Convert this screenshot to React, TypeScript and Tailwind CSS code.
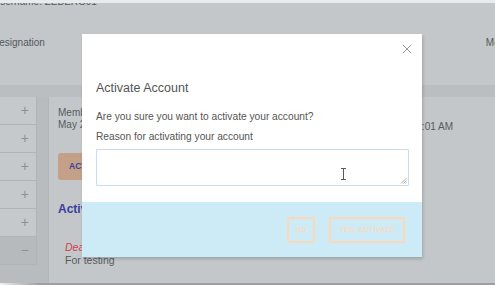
import { X } from 'lucide-react'

const font = { fontFamily: '"Liberation Sans", Arial, sans-serif' }

export default function App() {
  return (
    <div className="relative w-[495px] h-[285px] overflow-hidden bg-[#c3c7ca] text-[#4a4d50]" style={font}>
      <Page />
      <Modal />
    </div>
  )
}

function Page() {
  return (
    <div className="flex flex-col h-full">
      <div className="relative h-[9px] overflow-hidden shrink-0">
        <div className="h-[3px] bg-[#e9eaeb] absolute inset-x-0 top-0 z-10" />
        <div className="-ml-[7px] -mt-[4px] text-[10px] leading-[12px] text-[#585b5e] whitespace-nowrap">Username: ZEBERG01</div>
      </div>

      <div className="flex h-[76px] pt-[28px] text-[10px] leading-[12px] text-[#55585b] whitespace-nowrap shrink-0">
        <span className="-ml-[8px]">Designation</span>
        <span className="ml-[441px]">Mobile</span>
      </div>

      <div className="h-[12px] bg-[#babec1] shrink-0" />

      <div className="flex flex-1 min-h-0">
        <div className="w-[48px] bg-[#b8bcbf] flex">
          <div className="w-[37px] flex flex-col">
            {[0, 1, 2, 3, 4].map((i) => (
              <div key={i} className="h-[28px] bg-[#c5c9cc] border-b border-r border-[#b0b4b7] flex items-center justify-end pr-[7px] text-[14px] font-light text-[#8d9195]">
                +
              </div>
            ))}
            <div className="h-[28px] bg-[#b6babd] border-b border-r border-[#b0b4b7] flex items-center justify-end pr-[7px] text-[14px] text-[#8d9195]">
              −
            </div>
          </div>
        </div>

        <div className="flex-1 bg-[#c3c7ca] border-l border-[#b3b7ba] pl-[9px] pt-[10px] whitespace-nowrap">
          <div className="text-[10px] leading-[12px] text-[#585b5e]">Member since</div>
          <div className="flex justify-between pr-[42px] text-[10px] leading-[12px] text-[#585b5e]">
            <span>May 21, 2021</span>
            <span className="mt-[2px]">May 24, 2021 10:49:01 AM</span>
          </div>

          <div className="mt-[20px] w-[90px] h-[27px] rounded-[3px] bg-[#c4a088] flex items-center pl-[11px] text-[8.5px] font-bold text-[#3d40a0]">
            ACTIVATE
          </div>

          <div className="mt-[21px] text-[12px] leading-[16px] font-bold text-[#3a3e9e]">Activity Log</div>

          <div className="mt-[24px] pl-[7px] text-[10.5px] leading-[13px]">
            <div className="italic text-[#cf3f4a]">Deactivated</div>
            <div className="text-[#585b5e]">For testing</div>
          </div>
        </div>
      </div>

      <div className="h-[2px] shrink-0 bg-gradient-to-r from-[#f0f0f0] via-[#9c9ea0] via-[8%] to-[#9c9ea0]" />
    </div>
  )
}

function Modal() {
  return (
    <div className="absolute left-[82px] top-[34px] w-[340px] h-[223px] bg-white flex flex-col shadow-[1px_2px_3px_rgba(0,0,0,0.18)]">
      <div className="h-[30px] flex items-center justify-end pr-[7px]">
        <X className="w-[16px] h-[16px] text-[#7e7e7e]" strokeWidth={1.2} />
      </div>
      <div className="px-[14px]">
        <div className="mt-[14px] text-[12.5px] leading-[20px] text-[#555]">Activate Account</div>
        <div className="mt-[11px] text-[10.2px] leading-[16px] text-[#555]">Are you sure you want to activate your account?</div>
        <div className="mt-[4px] text-[10.2px] leading-[16px] text-[#555]">Reason for activating your account</div>
        <div className="relative mt-[4px] mr-[-1px] h-[37px] border border-[#c9dcef] rounded-[1px]">
          <svg className="absolute left-[243px] top-[18px]" width="7" height="12" viewBox="0 0 7 12">
            <path d="M1 0.5 H6 M1 11.5 H6 M3.5 0.5 V11.5" stroke="#5a5a5a" strokeWidth="1" fill="none" />
          </svg>
          <svg className="absolute right-[1px] bottom-[1px]" width="7" height="7" viewBox="0 0 7 7">
            <path d="M6.5 1 L1 6.5 M6.5 3.5 L3.5 6.5 M6.5 5.5 L5.5 6.5" stroke="#9a9a9a" strokeWidth="0.8" />
          </svg>
        </div>
      </div>
      <div className="mt-auto h-[55px] bg-[#cdeaf7] flex justify-end items-start gap-[14px] pt-[15px] pr-[17px]">
        <div className="w-[28px] h-[26px] border-2 border-[#fbd9b6] rounded-[3px] flex items-center justify-center text-[7.5px] font-bold text-[#f7dcc0] whitespace-nowrap">
          NO
        </div>
        <div className="w-[76px] h-[26px] border-2 border-[#fbd9b6] rounded-[3px] flex items-center justify-center text-[7.5px] font-bold text-[#f7dcc0] whitespace-nowrap">
          YES, ACTIVATE
        </div>
      </div>
    </div>
  )
}
